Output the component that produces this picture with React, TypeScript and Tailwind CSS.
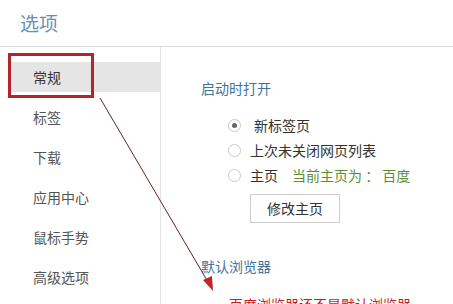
import React from "react";

const menu = ["常规", "标签", "下载", "应用中心", "鼠标手势", "高级选项"];

export default function App() {
  return (
    <div
      className="relative h-[304px] w-[453px] overflow-hidden bg-white text-[14px] text-[#333]"
      style={{ fontFamily: '"Microsoft YaHei", "Noto Sans CJK SC", sans-serif' }}
    >
      <header className="h-[47px] border-b border-[#d9d9d9] pl-[20px] pt-[9px]">
        <h1 className="text-[19px] leading-[28px] text-[#6b8fae]">选项</h1>
      </header>

      <div className="flex h-[257px]">
        <aside className="w-[161px] shrink-0 border-r border-[#e3e3e3] pt-[15px]">
          <ul className="flex flex-col gap-[10px]">
            {menu.map((m, i) => (
              <li
                key={m}
                className={
                  "ml-[10px] h-[30px] pl-[23px] leading-[30px] " +
                  (i === 0 ? "bg-[#e5e5e5] text-[#333]" : "text-[#555]")
                }
              >
                {m}
              </li>
            ))}
          </ul>
        </aside>

        <main className="flex-1 pl-[40px] pt-[31px]">
          <h2 className="leading-[20px] text-[#44739a]">启动时打开</h2>

          <div className="mt-[17px] flex flex-col gap-[5px] pl-[27px]">
            <Radio checked label="新标签页" extra />
            <Radio label="上次未关闭网页列表" />
            <div className="flex h-[20px] items-center">
              <RadioDot />
              <span className="ml-[9px]">主页</span>
              <span className="ml-[14px] text-[#5b8e32]">当前主页为 ： 百度</span>
            </div>
          </div>

          <button className="ml-[49px] mt-[9px] h-[29px] w-[90px] border border-[#cfcfcf] bg-white text-[14px] text-[#333]">
            修改主页
          </button>

          <h2 className="mt-[33px] leading-[20px] text-[#44739a]">默认浏览器</h2>
          <p className="ml-[28px] mt-[18px] leading-[20px] text-[#c81e1e]">
            百度浏览器还不是默认浏览器
          </p>
        </main>
      </div>

      <div className="absolute left-[8px] top-[53px] h-[45px] w-[86px] border-[3px] border-[#b3252b]" />

      <svg className="absolute left-0 top-0" width="453" height="304" viewBox="0 0 453 304">
        <line x1="100" y1="98" x2="208" y2="282" stroke="#6b1f22" strokeWidth="1" />
        <polygon points="213,291 203,280 212,276" fill="#c4232a" />
      </svg>
    </div>
  );
}

function RadioDot({ checked }: { checked?: boolean }) {
  return (
    <span className="flex h-[13px] w-[13px] items-center justify-center rounded-full border border-[#c9c9c9] bg-white">
      {checked && <span className="h-[5px] w-[5px] rounded-full bg-[#666]" />}
    </span>
  );
}

function Radio({ label, checked, extra }: { label: string; checked?: boolean; extra?: boolean }) {
  return (
    <div className="flex h-[20px] items-center">
      <RadioDot checked={checked} />
      <span className={extra ? "ml-[13px]" : "ml-[9px]"}>{label}</span>
    </div>
  );
}
